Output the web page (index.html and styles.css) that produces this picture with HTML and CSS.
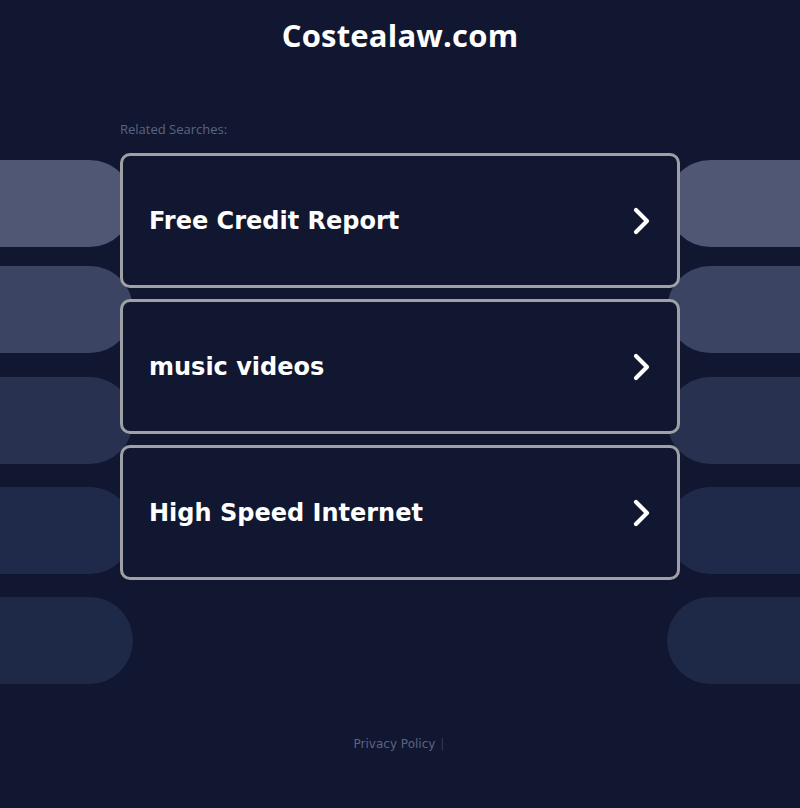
FILE: index.html
```html
<!DOCTYPE html>
<html lang="en">
<head>
<meta charset="utf-8">
<title>Costealaw.com</title>
<link rel="stylesheet" href="styles.css">
</head>
<body>
<div class="page">
  <div class="backdrop" aria-hidden="true">
    <div class="pill-row"><span class="pill left p1"></span><span class="pill right p1"></span></div>
    <div class="pill-row"><span class="pill left p2"></span><span class="pill right p2"></span></div>
    <div class="pill-row"><span class="pill left p3"></span><span class="pill right p3"></span></div>
    <div class="pill-row"><span class="pill left p4"></span><span class="pill right p4"></span></div>
    <div class="pill-row"><span class="pill left p5"></span><span class="pill right p5"></span></div>
  </div>
  <header class="header">
    <h1 class="title">Costealaw.com</h1>
  </header>
  <main class="content">
    <div class="related">Related Searches:</div>
    <div class="cards">
      <a class="card" href="#">
        <span class="card-text">Free Credit Report</span>
        <svg class="chevron" width="22" height="32" viewBox="0 0 22 32"><path d="M5 5 L16 16 L5 27" fill="none" stroke="#ffffff" stroke-width="4.2" stroke-linecap="round" stroke-linejoin="round"/></svg>
      </a>
      <a class="card" href="#">
        <span class="card-text">music videos</span>
        <svg class="chevron" width="22" height="32" viewBox="0 0 22 32"><path d="M5 5 L16 16 L5 27" fill="none" stroke="#ffffff" stroke-width="4.2" stroke-linecap="round" stroke-linejoin="round"/></svg>
      </a>
      <a class="card" href="#">
        <span class="card-text">High Speed Internet</span>
        <svg class="chevron" width="22" height="32" viewBox="0 0 22 32"><path d="M5 5 L16 16 L5 27" fill="none" stroke="#ffffff" stroke-width="4.2" stroke-linecap="round" stroke-linejoin="round"/></svg>
      </a>
    </div>
  </main>
  <footer class="footer">
    <a class="privacy" href="#">Privacy Policy</a><span class="sep">|</span>
  </footer>
</div>
</body>
</html>
```
FILE: styles.css
```css
html, body {
  margin: 0;
  padding: 0;
  background: #111730;
}
.page {
  position: relative;
  width: 800px;
  min-height: 808px;
  overflow: hidden;
}
.backdrop {
  position: absolute;
  top: 0;
  left: 0;
  right: 0;
  padding-top: 160px;
  display: flex;
  flex-direction: column;
  z-index: 0;
}
.pill-row {
  display: flex;
  justify-content: space-between;
  height: 87px;
}
.pill-row + .pill-row { margin-top: 23px; }
.pill-row:nth-child(2) { margin-top: 19px; }
.pill-row:nth-child(3) { margin-top: 24px; }
.pill {
  display: block;
  width: 133px;
  height: 87px;
}
.pill.left { border-radius: 0 44px 44px 0; }
.pill.right { border-radius: 44px 0 0 44px; }
.p1 { background: #4f5774; }
.p2 { background: #3b4462; }
.p3 { background: #283150; }
.p4 { background: #1f2a4a; }
.p5 { background: #1e2947; }

.header {
  position: relative;
  z-index: 1;
  height: 70px;
  display: flex;
  justify-content: center;
  align-items: center;
}
.title {
  margin: 0;
  font-family: "Open Sans", "DejaVu Sans", sans-serif;
  font-weight: 700;
  font-size: 31px;
  line-height: 40px;
  color: #ffffff;
  letter-spacing: 0.2px;
}
.content {
  position: relative;
  z-index: 1;
  width: 560px;
  margin: 50px auto 0;
}
.related {
  font-family: "Open Sans", "DejaVu Sans", sans-serif;
  font-size: 13px;
  line-height: 18px;
  color: #5b6482;
  margin-bottom: 15px;
}
.cards {
  display: flex;
  flex-direction: column;
  gap: 11px;
}
.card {
  box-sizing: border-box;
  height: 135px;
  border: 3px solid #a0a1a6;
  border-radius: 10px;
  background: #111730;
  display: flex;
  align-items: center;
  justify-content: space-between;
  padding: 0 24px 0 26px;
  text-decoration: none;
}
.card-text {
  font-family: "DejaVu Sans", sans-serif;
  font-weight: 700;
  font-size: 24px;
  color: #ffffff;
}
.chevron {
  display: block;
}
.footer {
  position: relative;
  z-index: 1;
  margin-top: 156px;
  text-align: center;
  font-family: "DejaVu Sans", sans-serif;
  font-size: 12px;
  line-height: 16px;
  padding-right: 2px;
}
.privacy {
  color: #5c6380;
  text-decoration: none;
}
.sep {
  color: #343b56;
  margin-left: 5px;
}
```
